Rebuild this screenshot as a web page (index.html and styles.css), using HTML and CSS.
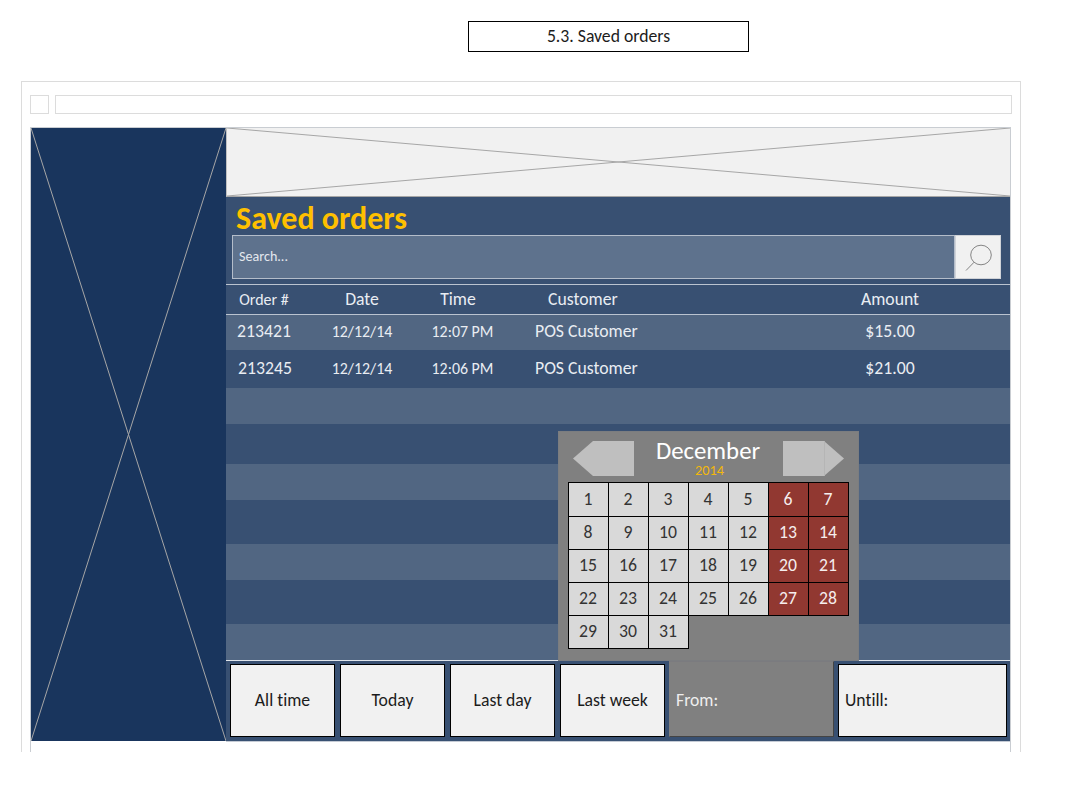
FILE: index.html
```html
<!DOCTYPE html>
<html lang="en">
<head>
<meta charset="utf-8">
<title>5.3. Saved orders</title>
<link rel="stylesheet" href="styles.css">
</head>
<body>
<h1 class="caption"><span>5.3. Saved orders</span></h1>
<div class="browser">
  <div class="toolbar"><div class="nav-box"></div><div class="address"></div></div>
  <div class="screen">
    <aside class="sidebar">
      <svg class="cross" viewBox="0 0 195 613" preserveAspectRatio="none"><path d="M0 0L195 613M195 0L0 613"/></svg>
    </aside>
    <main class="main">
      <div class="banner">
        <svg class="cross" viewBox="0 0 784 68" preserveAspectRatio="none"><path d="M0 0L784 68M784 0L0 68"/></svg>
      </div>
      <h2 class="title"><span>Saved orders</span></h2>
      <div class="search">
        <div class="field"><span>Search...</span></div>
        <button class="go" aria-label="Search"><svg width="45" height="42" viewBox="0 0 45 42"><ellipse cx="25" cy="19" rx="10.3" ry="9.8"/><path d="M18.1 26.2L10 34.5"/></svg></button>
      </div>
      <div class="row head"><span class="small">Order #</span><span>Date</span><span class="time">Time</span><span class="customer">Customer</span><span>Amount</span></div>
      <div class="row r1"><span>213421</span><span class="date">12/12/14</span><span class="clock">12:07 PM</span><span class="customer">POS Customer</span><span>$15.00</span></div>
      <div class="row r2"><span class="order">213245</span><span class="date">12/12/14</span><span class="clock">12:06 PM</span><span class="customer">POS Customer</span><span>$21.00</span></div>
      <div class="row r3"></div>
      <div class="row r4"></div>
      <div class="row r5"></div>
      <div class="row r6"></div>
      <div class="row r7"></div>
      <div class="row r8"></div>
      <div class="row r9"></div>
      <div class="filters">
        <button class="btn"><span>All time</span></button>
        <button class="btn"><span>Today</span></button>
        <button class="btn"><span>Last day</span></button>
        <button class="btn"><span>Last week</span></button>
        <button class="btn from"><span>From:</span></button>
        <button class="btn until"><span>Untill:</span></button>
      </div>
      <section class="calendar">
        <header class="cal-head">
          <svg width="61" height="35" viewBox="0 0 61 35"><path class="arrow" d="M0 17.5L20 0H61V35H20Z"/></svg>
          <div class="month"><span class="name">December</span><span class="year">2014</span></div>
          <svg width="61" height="35" viewBox="0 0 61 35"><path class="arrow" d="M61 17.5L41 0H0V35H41Z"/><path class="seam" d="M41.5 0V35"/></svg>
        </header>
        <div class="days">
          <span>1</span><span>2</span><span>3</span><span>4</span><span>5</span><span class="off">6</span><span class="off">7</span>
          <span>8</span><span>9</span><span>10</span><span>11</span><span>12</span><span class="off">13</span><span class="off">14</span>
          <span>15</span><span>16</span><span>17</span><span>18</span><span>19</span><span class="off">20</span><span class="off">21</span>
          <span>22</span><span>23</span><span>24</span><span>25</span><span>26</span><span class="off">27</span><span class="off">28</span>
          <span>29</span><span>30</span><span>31</span>
        </div>
      </section>
    </main>
  </div>
</div>
</body>
</html>
```
FILE: styles.css
```css
* { box-sizing: border-box; }
body { margin: 0; padding: 21px 0 0 21px; height: 786px; overflow: hidden; background: #fff; font: 17.7px/20px Carlito, Calibri, Lato, sans-serif; font-variant-ligatures: none; color: #1c1c1c; }
button { font: inherit; font-variant-ligatures: none; color: inherit; margin: 0; padding: 0; border-radius: 0; }
.caption { margin: 0 0 29px 447px; width: 281px; height: 31px; border: 1px solid #000; display: flex; align-items: center; justify-content: center; font-size: 17.7px; font-weight: 400; padding-bottom: 2px; }
.browser { width: 1000px; height: 671px; border: 1px solid #dcdcdc; border-bottom: 0; padding: 13px 8px 0; }
.toolbar { display: flex; gap: 6px; margin-bottom: 13px; height: 19px; }
.nav-box { width: 19px; border: 1px solid #dcdcdc; }
.address { flex: 1; border: 1px solid #dcdcdc; }
.screen { display: flex; height: 625px; border: 1px solid #c9cdd2; border-bottom: 0; width: 981px; }
.sidebar { width: 195px; height: 613px; background: #19355d; }
.cross { display: block; width: 100%; height: 100%; fill: none; stroke: #a6a6a6; stroke-width: 1; }
.main { position: relative; width: 784px; height: 614px; background: #385072; border-bottom: 1px solid #c5cbd5; color: #e9edf2; display: flex; flex-direction: column; }
.banner { height: 69px; background: #f1f1f1; border-bottom: 1px solid #a6a6a6; border-left: 1px solid #c0c0c0; flex: none; }
.title { margin: 0; padding: 5px 0 0 10px; height: 38px; font-size: 32px; line-height: 34px; font-weight: 700; color: #ffc000; flex: none; }
.search { display: flex; height: 44px; margin: 0 9px 5px 6px; flex: none; }
.field { flex: 1; border: 1px solid #b4bdca; background: #5e728d; padding: 11px 0 0 6px; font-size: 14.1px; color: #e4e8ed; }
.go { width: 46px; border: 1px solid #d0d3d8; background: #f1f1f1; }
.go svg { display: block; fill: none; stroke: #858585; stroke-width: 1; }
.row { display: grid; grid-template-columns: 76px 120px 80px 268px 240px; align-items: center; justify-items: center; flex: none; }
.row .customer { justify-self: start; padding-left: 33px; }
.head { height: 31px; padding-bottom: 2px; border-top: 1px solid #bac3d0; border-bottom: 1px solid #bac3d0; }
.row.head .customer { padding-left: 46px; }
.head .small { font-size: 16px; padding-top: 2px; }
.head .time { padding-right: 8px; }
.date, .clock { font-size: 15.9px; padding-top: 1px; }
.clock { padding-left: 1px; }
.order { padding-left: 2px; }
.row.r1, .row.r3, .row.r5, .row.r7, .row.r9 { background: #516682; }
.r1 { height: 35px; padding-bottom: 3px; }
.r2 { height: 38px; padding-bottom: 2px; }
.r3, .r5, .r7 { height: 36px; }
.r4 { height: 40px; }
.r6, .r8 { height: 44px; }
.r9 { height: 37px; border-bottom: 1px solid #dfe4ea; }
.filters { display: flex; gap: 5px; padding: 3px 3px 4px 4px; height: 80px; flex: none; }
.btn { width: 105px; height: 73px; flex: none; border: 1px solid #000; background: #f1f1f1; color: #1c1c1c; padding-bottom: 2px; }
.btn.from { width: 165px; height: 76px; margin: -3px -1px 0 -1px; border-color: #7b7b7f #444 #444 #808080; background: #808080; color: #eee; text-align: left; padding: 1px 0 0 6px; }
.btn.until { flex: 1; text-align: left; padding-left: 6px; }
.calendar { position: absolute; left: 332px; top: 303px; width: 301px; height: 230px; background: #808080; border: 1px solid #7b7d80; padding: 9px 9px 0; }
.cal-head { display: flex; justify-content: space-between; height: 41px; padding: 0 5px 0 5px; }
.arrow { fill: #bfbfbf; }
.seam { stroke: #b5b5b5; fill: none; }
.month { display: flex; flex-direction: column; align-items: center; margin-top: -1px; padding-right: 1px; }
.name { font-size: 24.8px; line-height: 22px; color: #fff; }
.year { font-size: 14.3px; line-height: 14px; color: #f2b70c; padding: 1px 0 0 3px; }
.days { display: grid; grid-template-columns: repeat(7, 40px); grid-template-rows: 34px 33px 33px 33px 33px; color: #333; }
.days span { display: flex; align-items: center; justify-content: center; margin: 0 -1px -1px 0; padding: 0 1px 2px 0; border: 1px solid #000; background: #d9d9d9; }
.days .off { background: #913831; color: #f6eeee; }
```
